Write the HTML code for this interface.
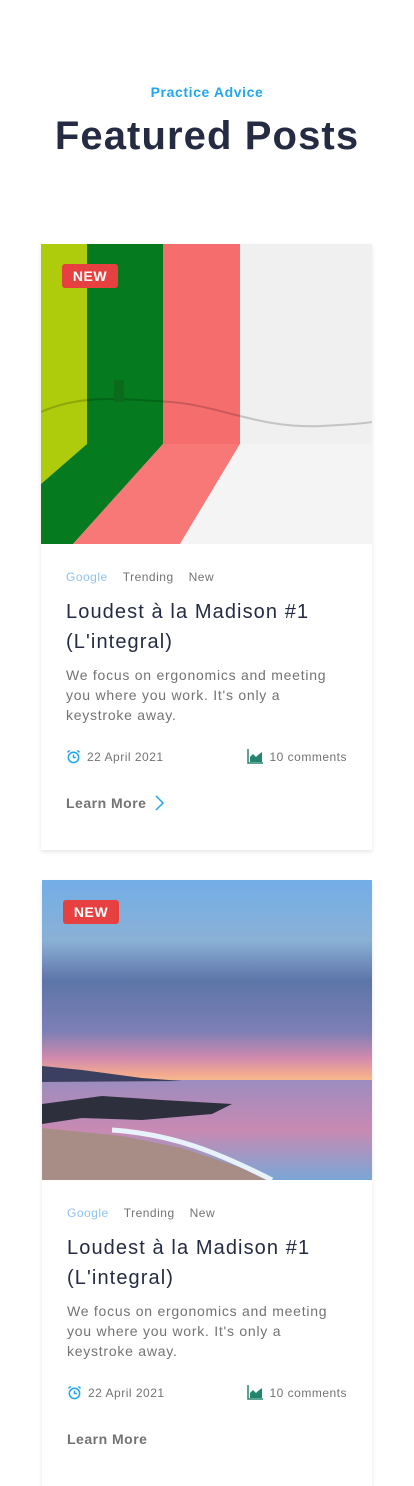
<!DOCTYPE html>
<html><head><meta charset="utf-8"><style>
*{margin:0;padding:0;box-sizing:border-box}
body{width:414px;height:1402px;overflow:hidden;background:#fff;font-family:"Liberation Sans",sans-serif}
.sub{position:absolute;top:84px;width:414px;text-align:center;color:#23a6f0;font-weight:bold;font-size:14px;letter-spacing:.6px}
h1{position:absolute;top:114px;width:414px;text-align:center;color:#252b42;font-size:40px;font-weight:bold;letter-spacing:1.1px}
.card{position:absolute;left:41px;width:331px;background:#fff;box-shadow:0 2px 4px rgba(0,0,0,.1)}
.img{position:relative;width:331px;height:300px;overflow:hidden}
.img svg{display:block}
.badge{position:absolute;left:21px;top:20px;width:56px;height:24px;background:#e74040;color:#fff;font-weight:bold;font-size:14px;border-radius:3px;text-align:center;line-height:24px;letter-spacing:.5px}
.body{padding:26px 25px 0 25px;position:relative}
.tags{font-size:12px;color:#737373;height:16px;letter-spacing:.5px}
.tags span{margin-right:15px}.tags .g{color:#8ec2f2}
.t{margin-top:11px;font-size:20px;line-height:30px;color:#252b42;letter-spacing:1.1px}
.d{margin-top:8px;font-size:14px;line-height:20px;color:#737373;letter-spacing:.75px}
.meta{margin-top:24px;font-size:12px;color:#737373;height:16px;position:relative;letter-spacing:.5px}
.meta .l{position:absolute;left:0;top:0;display:flex;align-items:center;gap:6px}
.meta .r{position:absolute;right:0;top:0;display:flex;align-items:center;gap:6px}
.lm{margin-top:30px;font-weight:bold;font-size:14px;color:#737373;display:flex;gap:9px;height:55px;align-items:flex-start;letter-spacing:.5px}
</style></head><body>
<div class="sub">Practice Advice</div>
<h1>Featured Posts</h1>

<div class="card" style="top:244px">
<div class="img"><svg width="331" height="300">
<rect width="331" height="300" fill="#ededed"/>
<rect x="0" y="0" width="46" height="200" fill="#aecb0c"/>
<rect x="46" y="0" width="76" height="200" fill="#067a1f"/>
<rect x="122" y="0" width="77" height="200" fill="#f66d6d"/>
<rect x="199" y="0" width="132" height="200" fill="#f0f0f0"/>
<polygon points="0,200 46,200 0,240" fill="#aecb0c"/>
<polygon points="46,200 122,200 32,300 0,300 0,240" fill="#067a1f"/>
<polygon points="122,200 199,200 139,300 32,300" fill="#f87878"/>
<polygon points="199,200 331,200 331,300 139,300" fill="#f4f4f4"/>
<path d="M0,168 C40,150 80,155 130,158 C180,162 220,185 280,182 C300,181 320,180 331,178" stroke="rgba(0,0,0,.18)" stroke-width="2" fill="none"/>
<rect x="73" y="136" width="10" height="22" fill="#0b6a1c"/>
</svg><div class="badge">NEW</div></div>
<div class="body">
<div class="tags"><span class="g">Google</span><span>Trending</span><span>New</span></div>
<div class="t">Loudest à la Madison #1 (L'integral)</div>
<div class="d">We focus on ergonomics and meeting you where you work. It's only a keystroke away.</div>
<div class="meta"><div class="l"><svg width="15" height="15" viewBox="0 0 16 16"><circle cx="8" cy="9" r="5.5" stroke="#23a6f0" stroke-width="1.6" fill="none"/><path d="M8 6v3h2.5M1.5 3.5l2.5-2M14.5 3.5l-2.5-2" stroke="#23a6f0" stroke-width="1.6" fill="none"/></svg>22 April 2021</div>
<div class="r"><svg width="16" height="15" viewBox="0 0 16 15"><path d="M1 0v14h15" stroke="#23856d" stroke-width="1.5" fill="none"/><path d="M3 13V8l3-3 3 3 2-2 4-3v10z" fill="#23856d"/></svg>10 comments</div></div>
<div class="lm">Learn More <svg width="10" height="16" viewBox="0 0 10 16"><path d="M1 1l7 7-7 7" stroke="#23a6f0" stroke-width="1.5" fill="none"/></svg></div>
</div></div>

<div class="card" style="top:880px;left:42px;width:330px">
<div class="img"><svg width="330" height="300">
<defs><linearGradient id="sky" x1="0" y1="0" x2="0" y2="1">
<stop offset="0" stop-color="#72aee6"/><stop offset=".3" stop-color="#8ab0d6"/><stop offset=".5" stop-color="#5d75a8"/><stop offset=".75" stop-color="#7c7fb5"/><stop offset=".88" stop-color="#d08aae"/><stop offset=".96" stop-color="#f2a98f"/><stop offset="1" stop-color="#f6c08c"/></linearGradient>
<linearGradient id="sea" x1="0" y1="0" x2="0" y2="1"><stop offset="0" stop-color="#9c8cc0"/><stop offset=".5" stop-color="#c88ab2"/><stop offset="1" stop-color="#7aa6d6"/></linearGradient></defs>
<rect width="330" height="202" fill="url(#sky)"/>
<rect y="200" width="330" height="100" fill="url(#sea)"/>
<path d="M0,186 L40,190 L100,198 L140,201 L0,202z" fill="#3b4060"/>
<path d="M0,224 L60,216 L120,220 L190,224 L170,234 L100,240 L40,238 L0,244z" fill="#2e2f3d"/>
<path d="M0,248 L80,256 L140,268 L200,288 L230,300 L0,300z" fill="#a88c86"/>
<path d="M70,250 C130,254 175,272 230,300" stroke="#e8f2fb" stroke-width="5" fill="none"/>
</svg><div class="badge">NEW</div></div>
<div class="body">
<div class="tags"><span class="g">Google</span><span>Trending</span><span>New</span></div>
<div class="t">Loudest à la Madison #1 (L'integral)</div>
<div class="d">We focus on ergonomics and meeting you where you work. It's only a keystroke away.</div>
<div class="meta"><div class="l"><svg width="15" height="15" viewBox="0 0 16 16"><circle cx="8" cy="9" r="5.5" stroke="#23a6f0" stroke-width="1.6" fill="none"/><path d="M8 6v3h2.5M1.5 3.5l2.5-2M14.5 3.5l-2.5-2" stroke="#23a6f0" stroke-width="1.6" fill="none"/></svg>22 April 2021</div>
<div class="r"><svg width="16" height="15" viewBox="0 0 16 15"><path d="M1 0v14h15" stroke="#23856d" stroke-width="1.5" fill="none"/><path d="M3 13V8l3-3 3 3 2-2 4-3v10z" fill="#23856d"/></svg>10 comments</div></div>
<div class="lm">Learn More</div>
</div></div>
</body></html>
